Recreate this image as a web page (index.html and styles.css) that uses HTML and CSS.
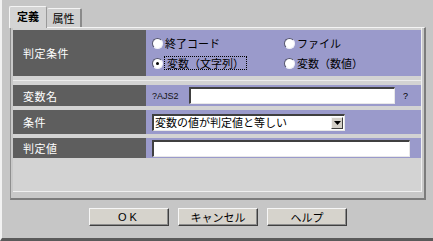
FILE: index.html
```html
<!DOCTYPE html>
<html lang="ja">
<head>
  <meta charset="UTF-8" />
  <title>判定条件</title>
  <link rel="stylesheet" href="styles.css">
</head>
<body>
  <div class="dialog">
    <div class="tabs">
      <div class="tab active">定義</div>
      <div class="tab">属性</div>
    </div>

    <div class="panel">
      <div class="section top-section">
        <div class="label tall">判定条件</div>
        <div class="value radios">
          <label class="radio"><span class="dot"></span>終了コード</label>
          <label class="radio"><span class="dot"></span>ファイル</label>
          <label class="radio"><span class="dot checked"></span><span class="focus">変数（文字列）</span></label>
          <label class="radio"><span class="dot"></span>変数（数値）</label>
        </div>
      </div>

      <div class="section rows">
        <div class="row first">
          <div class="label">変数名</div>
          <div class="value">
            <span class="prefix">?AJS2</span>
            <div class="field name-field"></div>
            <span class="suffix">?</span>
          </div>
        </div>
        <div class="row mid">
          <div class="label">条件</div>
          <div class="value">
            <div class="select">
              <span>変数の値が判定値と等しい</span>
              <span class="arrow">
                <svg width="7" height="4" viewBox="0 0 7 4"><path d="M0 0h7L3.5 4z" fill="#000"/></svg>
              </span>
            </div>
          </div>
        </div>
        <div class="row">
          <div class="label">判定値</div>
          <div class="value">
            <div class="field value-field"></div>
          </div>
        </div>
      </div>
    </div>

    <div class="buttons">
      <button class="btn ok">OK</button>
      <button class="btn">キャンセル</button>
      <button class="btn">ヘルプ</button>
    </div>
  </div>
</body>
</html>
```

FILE: styles.css
```css
html, body {
  margin: 0;
  padding: 0;
}
body {
  width: 433px;
  height: 241px;
  background: #c6c6c6;
  font-family: "Noto Sans CJK JP", "Liberation Sans", sans-serif;
  font-size: 11px;
  color: #000;
  overflow: hidden;
}
.dialog {
  box-sizing: border-box;
  width: 433px;
  height: 241px;
  border-left: 2px solid #f2f2f2;
  border-bottom: 3px solid #5a5a5a;
  padding: 5px 0 0 5px;
}
.tabs {
  display: flex;
  align-items: flex-end;
  height: 22px;
  margin-left: 2px;
}
.tab {
  box-sizing: border-box;
  height: 19px;
  width: 35px;
  padding-top: 2px;
  text-align: center;
  line-height: 15px;
  background: #cfcfcf;
  border-top: 1px solid #f4f4f4;
  border-right: 2px solid #8a8a8a;
  border-radius: 2px 2px 0 0;
}
.tab.active {
  height: 22px;
  width: 38px;
  font-weight: bold;
  background: #d4d4d4;
  border-left: 1px solid #f4f4f4;
  border-right: 1px solid #9a9a9a;
  position: relative;
  z-index: 1;
  margin-bottom: -1px;
}
.panel {
  box-sizing: border-box;
  width: 416px;
  height: 173px;
  margin-left: 3px;
  background: #d3d3d3;
  border-top: 1px solid #f4f4f4;
  border-left: 1px solid #8e8e8e;
  border-right: 2px solid #7c7c7c;
  border-bottom: 2px solid #7c7c7c;
  box-shadow: inset 2px 0 0 #c8c8c8, inset -2px -6px 0 #c8c8c8, inset -3px -7px 0 #f0f0f0;
  padding: 2px 3px 0 2px;
}
.section {
  display: flex;
  flex-direction: column;
  gap: 4px;
}
.top-section {
  flex-direction: row;
  gap: 0;
  height: 46px;
  margin-bottom: 4px;
}
.rows {
  border-top: 1px solid #ececec;
  padding-top: 4px;
}
.row {
  display: flex;
  height: 20px;
}
.row.first {
  height: 21px;
}
.row.mid {
  height: 24px;
}
.label {
  box-sizing: border-box;
  width: 133px;
  flex: none;
  background: #5e5e5e;
  color: #fff;
  padding-left: 10px;
  display: flex;
  align-items: center;
  letter-spacing: 0.5px;
}
.value {
  flex: 1;
  background: #9a9acb;
  display: flex;
  align-items: center;
  padding-left: 6px;
}
.radios {
  display: grid;
  grid-template-columns: 132px 1fr;
  align-content: center;
  row-gap: 6px;
  padding-left: 6px;
}
.radio {
  display: flex;
  align-items: center;
  gap: 2px;
  height: 14px;
}
.dot {
  width: 9px;
  height: 9px;
  border-radius: 50%;
  background: #fff;
  border: 1px solid;
  border-color: #55556e #f0f0f8 #f0f0f8 #55556e;
  position: relative;
}
.dot.checked::after {
  content: "";
  position: absolute;
  left: 3px;
  top: 3px;
  width: 3px;
  height: 3px;
  border-radius: 50%;
  background: #000;
}
.focus {
  outline: 1px dotted #000;
  padding: 0 2px;
  line-height: 12px;
}
.prefix {
  font-family: "Liberation Sans", sans-serif;
  font-size: 9px;
  width: 37px;
  color: #111;
}
.field {
  box-sizing: border-box;
  height: 17px;
  background: #fff;
  border-top: 2px solid #404040;
  border-left: 2px solid #404040;
  border-right: 1px solid #e8e8e8;
  border-bottom: 1px solid #e8e8e8;
}
.name-field {
  width: 206px;
}
.suffix {
  font-family: "Liberation Sans", sans-serif;
  font-size: 9px;
  margin-left: 8px;
}
.value-field {
  width: 258px;
}
.select {
  box-sizing: border-box;
  width: 193px;
  height: 17px;
  background: #fff;
  border-top: 2px solid #404040;
  border-left: 2px solid #404040;
  border-right: 1px solid #e8e8e8;
  border-bottom: 1px solid #e8e8e8;
  display: flex;
  align-items: center;
  justify-content: space-between;
  padding-left: 1px;
  font-size: 11px;
  line-height: 13px;
}
.arrow {
  box-sizing: border-box;
  width: 12px;
  height: 12px;
  margin-right: 1px;
  background: #d4d0c8;
  border: 1px solid;
  border-color: #f4f4f4 #404040 #404040 #f4f4f4;
  display: flex;
  align-items: center;
  justify-content: center;
}
.buttons {
  display: flex;
  gap: 9px;
  margin: 8px 0 0 82px;
}
.btn {
  box-sizing: border-box;
  width: 80px;
  height: 18px;
  padding: 0;
  background: #d6d3cc;
  border: 1px solid;
  border-color: #f6f6f6 #404040 #404040 #f6f6f6;
  box-shadow: inset -1px -1px 0 #8c8c8c;
  font-family: "Noto Sans CJK JP", "Liberation Sans", sans-serif;
  font-size: 11px;
  line-height: 14px;
  color: #000;
}
.btn.ok {
  letter-spacing: 3px;
  font-family: "Liberation Sans", sans-serif;
}
```
